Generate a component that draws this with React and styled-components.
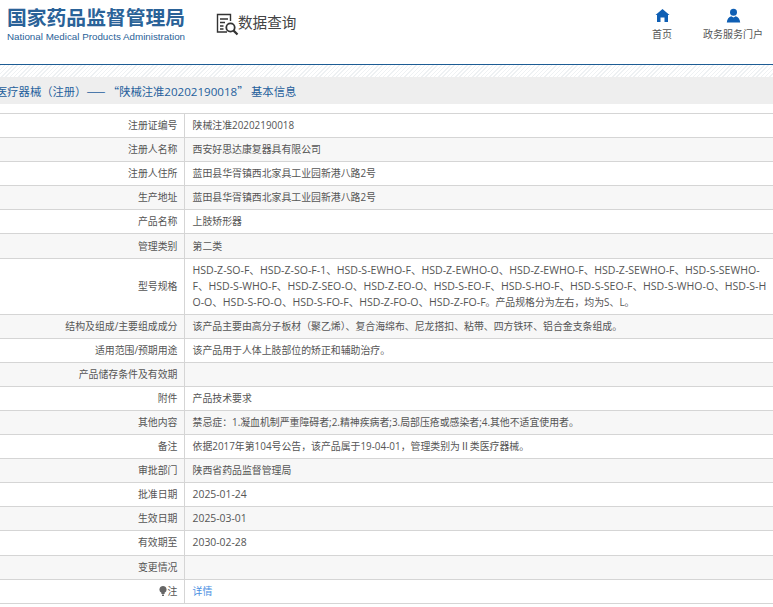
import React from "react";
import styled, { createGlobalStyle } from "styled-components";

const GlobalStyle = createGlobalStyle`
  html, body {
    margin: 0;
    padding: 0;
    background: #fff;
    overflow: hidden;
    font-family: "Open Sans", "Noto Sans CJK SC", sans-serif;
  }
`;

const rows = [
  ["注册证编号", "陕械注准20202190018"],
  ["注册人名称", "西安好思达康复器具有限公司"],
  ["注册人住所", "蓝田县华胥镇西北家具工业园新港八路2号"],
  ["生产地址", "蓝田县华胥镇西北家具工业园新港八路2号"],
  ["产品名称", "上肢矫形器"],
  ["管理类别", "第二类"],
  ["结构及组成/主要组成成分", "该产品主要由高分子板材（聚乙烯）、复合海绵布、尼龙搭扣、粘带、四方铁环、铝合金支条组成。"],
  ["适用范围/预期用途", "该产品用于人体上肢部位的矫正和辅助治疗。"],
  ["产品储存条件及有效期", ""],
  ["附件", "产品技术要求"],
  ["其他内容", "禁忌症：1.凝血机制严重障碍者;2.精神疾病者;3.局部压疮或感染者;4.其他不适宜使用者。"],
  ["备注", "依据2017年第104号公告，该产品属于19-04-01，管理类别为Ⅱ类医疗器械。"],
  ["审批部门", "陕西省药品监督管理局"],
  ["批准日期", "2025-01-24"],
  ["生效日期", "2025-03-01"],
  ["有效期至", "2030-02-28"],
  ["变更情况", ""],
];

const models =
  "HSD-Z-SO-F、HSD-Z-SO-F-1、HSD-S-EWHO-F、HSD-Z-EWHO-O、HSD-Z-EWHO-F、HSD-Z-SEWHO-F、HSD-S-SEWHO-F、HSD-S-WHO-F、HSD-Z-SEO-O、HSD-Z-EO-O、HSD-S-EO-F、HSD-S-HO-F、HSD-S-SEO-F、HSD-S-WHO-O、HSD-S-HO-O、HSD-S-FO-O、HSD-S-FO-F、HSD-Z-FO-O、HSD-Z-FO-F";

const isDate = (text) => /^\d{4}-\d{2}-\d{2}$/.test(text);

const App = () => {
  // the tall model row sits between the sixth and seventh row and keeps the stripe going
  const plainRows = rows.map(([label, value], i) => (
    <Row key={label} $striped={i < 6 ? i % 2 === 1 : i % 2 === 0}>
      <Label>{label}</Label>
      <Value $date={isDate(value)}>{value}</Value>
    </Row>
  ));

  return (
    <>
      <GlobalStyle />
      <Header>
        <Brand>
          <BrandName>国家药品监督管理局</BrandName>
          <BrandEn>National Medical Products Administration</BrandEn>
        </Brand>
        <Query>
          <svg width="24" height="24" viewBox="0 0 24 24" fill="none" stroke="#333" strokeWidth="1.4">
            <path d="M12 20H2.5V2.5H15.5V9" />
            <path d="M5 7H13M5 10.5H10M5 14H8.5M5 17H8.5" />
            <circle cx="15.5" cy="15.5" r="4.2" strokeWidth="1.8" />
            <path d="M18.6 18.6L22.5 22.5" strokeWidth="2.2" />
          </svg>
          <span>数据查询</span>
        </Query>
        <Nav>
          <NavItem>
            <svg width="15" height="15" viewBox="0 0 15 15" fill="#0f5fb4">
              <path d="M7.5 1L14.5 7H13V14H9.5V9.5H5.5V14H2V7H.5Z" />
            </svg>
            <span>首页</span>
          </NavItem>
          <NavItem>
            <svg width="15" height="15" viewBox="0 0 15 15" fill="#0f5fb4">
              <circle cx="7.5" cy="4.2" r="3.5" />
              <path d="M0.8 14.5C1 11 3 8.8 5.2 8.2L7.5 9.6L9.8 8.2C12 8.8 14 11 14.2 14.5Z" />
            </svg>
            <span>政务服务门户</span>
          </NavItem>
        </Nav>
      </Header>
      <Hatch />
      <Crumb>
        医疗器械（注册）—— “陕械注准<CrumbNo>20202190018</CrumbNo>” 基本信息
      </Crumb>
      <Table>
        <tbody>
          {plainRows.slice(0, 6)}
          <Row $tall>
            <Label>型号规格</Label>
            <Value>
              <Models>{models}</Models>。产品规格分为左右，均为S、L。
            </Value>
          </Row>
          {plainRows.slice(6)}
          <Row>
            <Label>
              <Bulb viewBox="0 0 8 10" fill="#666">
                <path d="M4 0A3.6 3.6 0 0 1 5.6 6.8V8H2.4V6.8A3.6 3.6 0 0 1 4 0ZM3 8.6H5V10H3Z" />
              </Bulb>
              注
            </Label>
            <Value>
              <DetailLink href="#">详情</DetailLink>
            </Value>
          </Row>
        </tbody>
      </Table>
    </>
  );
};

export default App;

const Header = styled.header`
  display: flex;
  align-items: flex-start;
  height: 64px;
  border-bottom: 1px solid #1d5c94;
`;

const Brand = styled.div`
  display: flex;
  flex-direction: column;
  margin: 5px 0 0 7px;
  width: 178px;
`;

const BrandName = styled.div`
  font-family: "Noto Sans CJK SC", sans-serif;
  font-size: 19.8px;
  font-weight: 700;
  line-height: 24px;
  color: #2a6298;
  white-space: nowrap;
`;

const BrandEn = styled.div`
  font-family: "Liberation Sans", sans-serif;
  font-size: 9.8px;
  line-height: 12px;
  margin-top: 2px;
  color: #2a6298;
  white-space: nowrap;
`;

const Query = styled.div`
  display: flex;
  align-items: flex-start;
  margin: 12px 0 0 30px;
  font-family: "Noto Sans CJK SC", sans-serif;
  font-size: 14.6px;
  line-height: 20px;
  color: #444;

  svg {
    margin-right: -1px;
  }
`;

const Nav = styled.nav`
  display: flex;
  margin-left: auto;
  padding: 8px 10px 0 0;
  gap: 31px;
`;

const NavItem = styled.div`
  display: flex;
  flex-direction: column;
  align-items: center;
  gap: 4px;
  font-family: "Noto Sans CJK SC", sans-serif;
  font-size: 10px;
  line-height: 14px;
  color: #555;
`;

const Hatch = styled.div`
  height: 12px;
  background: repeating-linear-gradient(135deg, #eef1f3 0 1px, #fff 1px 3px);
`;

const Crumb = styled.div`
  height: 27px;
  line-height: 28px;
  margin-left: -4px;
  background: #eeeeee;
  font-family: "Noto Sans CJK SC", sans-serif;
  font-size: 11.3px;
  color: #1f5f9c;
  white-space: nowrap;
`;

const CrumbNo = styled.span`
  font-family: "Open Sans", sans-serif;
  font-size: 11.6px;
`;

const Table = styled.table`
  width: 800px;
  margin: 9px 0 0 -8px;
  border-collapse: collapse;
  table-layout: fixed;
  font-family: "Open Sans", "Noto Sans CJK SC", sans-serif;
  font-size: 9.9px;
  color: #555;
`;

const Row = styled.tr`
  height: ${(p) => (p.$tall ? "56px" : "24.1px")};
  background: ${(p) => (p.$striped ? "#f7f7f7" : "#fff")};
`;

const Label = styled.td`
  width: 192px;
  box-sizing: border-box;
  padding: 0 6px 1px 0;
  text-align: right;
  border: 1px solid #d5d5d5;
  border-left: 0;
  color: #555;
`;

const Value = styled.td`
  padding: 0 23.5px 1px 8px;
  line-height: 16px;
  font-size: ${(p) => (p.$date ? "10.4px" : "inherit")};
  border: 1px solid #d5d5d5;
  border-right: 0;
  word-break: break-all;
`;

const Models = styled.span`
  font-size: 10.55px;
`;

const Bulb = styled.svg`
  width: 8px;
  height: 10px;
  margin-right: 1px;
  vertical-align: -1px;
`;

const DetailLink = styled.a`
  color: #4a90e2;
  text-decoration: none;
`;
